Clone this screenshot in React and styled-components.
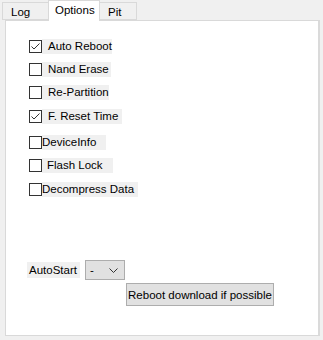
import React from 'react'
import styled, { createGlobalStyle } from 'styled-components'

const GlobalStyle = createGlobalStyle`
  html, body {
    margin: 0;
    padding: 0;
    background: #f0f0f0;
  }
  body {
    font-family: "Liberation Sans", Arial, sans-serif;
    font-size: 11.5px;
    color: #000;
  }
`

const Window = styled.div`
  width: 323px;
  height: 340px;
  display: flex;
  flex-direction: column;
  background: #f0f0f0;
`

const TabStrip = styled.div`
  display: flex;
  align-items: flex-end;
  height: 20px;
  padding-left: 2px;
  position: relative;
  z-index: 1;
`

const Tab = styled.div`
  box-sizing: border-box;
  width: ${p => p.w}px;
  height: ${p => (p.active ? 21 : 18)}px;
  margin-left: ${p => (p.active ? -1 : 0)}px;
  margin-right: ${p => (p.active ? -1 : 0)}px;
  margin-bottom: ${p => (p.active ? -1 : 0)}px;
  padding: ${p => (p.active ? '2px 0 0 6px' : '2px 0 0 8px')};
  background: ${p => (p.active ? '#fff' : '#f0f0f0')};
  border: 1px solid #d9d9d9;
  border-bottom: ${p => (p.active ? 'none' : '1px solid #d9d9d9')};
  line-height: 14px;
`

const Panel = styled.div`
  box-sizing: border-box;
  flex: 1;
  margin: 0 3px 4px 5px;
  background: #fff;
  border: 1px solid #d9d9d9;
  border-right: 2px solid #dadada;
  padding: 18px 0 0 23px;
  display: flex;
  flex-direction: column;
`

const Options = styled.div`
  display: flex;
  flex-direction: column;
`

const Row = styled.label`
  display: flex;
  align-items: center;
  height: 15px;
  margin-top: ${p => p.gap}px;
`

const Box = styled.span`
  box-sizing: border-box;
  width: 13px;
  height: 13px;
  border: 1px solid #333;
  background: #fff;
  display: flex;
  align-items: center;
  justify-content: center;
  flex-shrink: 0;
`

const Caption = styled.span`
  box-sizing: border-box;
  width: ${p => p.w}px;
  height: 15px;
  line-height: 15px;
  padding-left: ${p => p.pad}px;
  background: #f0f0f0;
  white-space: nowrap;
`

const StartRow = styled.div`
  display: flex;
  align-items: center;
  margin-top: 63px;
  margin-left: -2px;
`

const StartLabel = styled.span`
  height: 16px;
  line-height: 16px;
  padding: 0 3px 0 2px;
  background: #f0f0f0;
`

const Select = styled.div`
  box-sizing: border-box;
  width: 40px;
  height: 20px;
  margin-left: 5px;
  background: #e1e1e1;
  border: 1px solid #adadad;
  display: flex;
  align-items: center;
  justify-content: space-between;
  padding: 0 6px 0 4px;
`

const ButtonRow = styled.div`
  display: flex;
  margin-top: 3px;
  padding-left: 97px;
`

const Button = styled.button`
  box-sizing: border-box;
  width: 148px;
  height: 23px;
  background: #e1e1e1;
  border: 1px solid #adadad;
  font-family: inherit;
  font-size: 11.5px;
  color: #000;
  padding: 0;
  white-space: nowrap;
`

const Check = () => (
  <svg width="11" height="11" viewBox="0 0 11 11">
    <polyline points="1.5,5.5 4,8 9.5,2.5" fill="none" stroke="#333" strokeWidth="1" />
  </svg>
)

const items = [
  { label: 'Auto Reboot', checked: true, w: 70, pad: 6, gap: 0 },
  { label: 'Nand Erase', checked: false, w: 69, pad: 6, gap: 8 },
  { label: 'Re-Partition', checked: false, w: 67, pad: 6, gap: 8 },
  { label: 'F. Reset Time', checked: true, w: 80, pad: 6, gap: 9 },
  { label: 'DeviceInfo', checked: false, w: 64, pad: 0, gap: 11 },
  { label: 'Flash Lock', checked: false, w: 71, pad: 5, gap: 8 },
  { label: 'Decompress Data', checked: false, w: 96, pad: 0, gap: 9 },
]

export default () => (
  <Window>
    <GlobalStyle />
    <TabStrip>
      <Tab w={47}>Log</Tab>
      <Tab w={52} active>Options</Tab>
      <Tab w={38}>Pit</Tab>
    </TabStrip>
    <Panel>
      <Options>
        {items.map(it => (
          <Row key={it.label} gap={it.gap}>
            <Box>{it.checked && <Check />}</Box>
            <Caption w={it.w} pad={it.pad}>{it.label}</Caption>
          </Row>
        ))}
      </Options>
      <StartRow>
        <StartLabel>AutoStart</StartLabel>
        <Select>
          <span>-</span>
          <svg width="9" height="5" viewBox="0 0 9 5">
            <polyline points="0.5,0.5 4.5,4.5 8.5,0.5" fill="none" stroke="#333" strokeWidth="1" />
          </svg>
        </Select>
      </StartRow>
      <ButtonRow>
        <Button>Reboot download if possible</Button>
      </ButtonRow>
    </Panel>
  </Window>
)
